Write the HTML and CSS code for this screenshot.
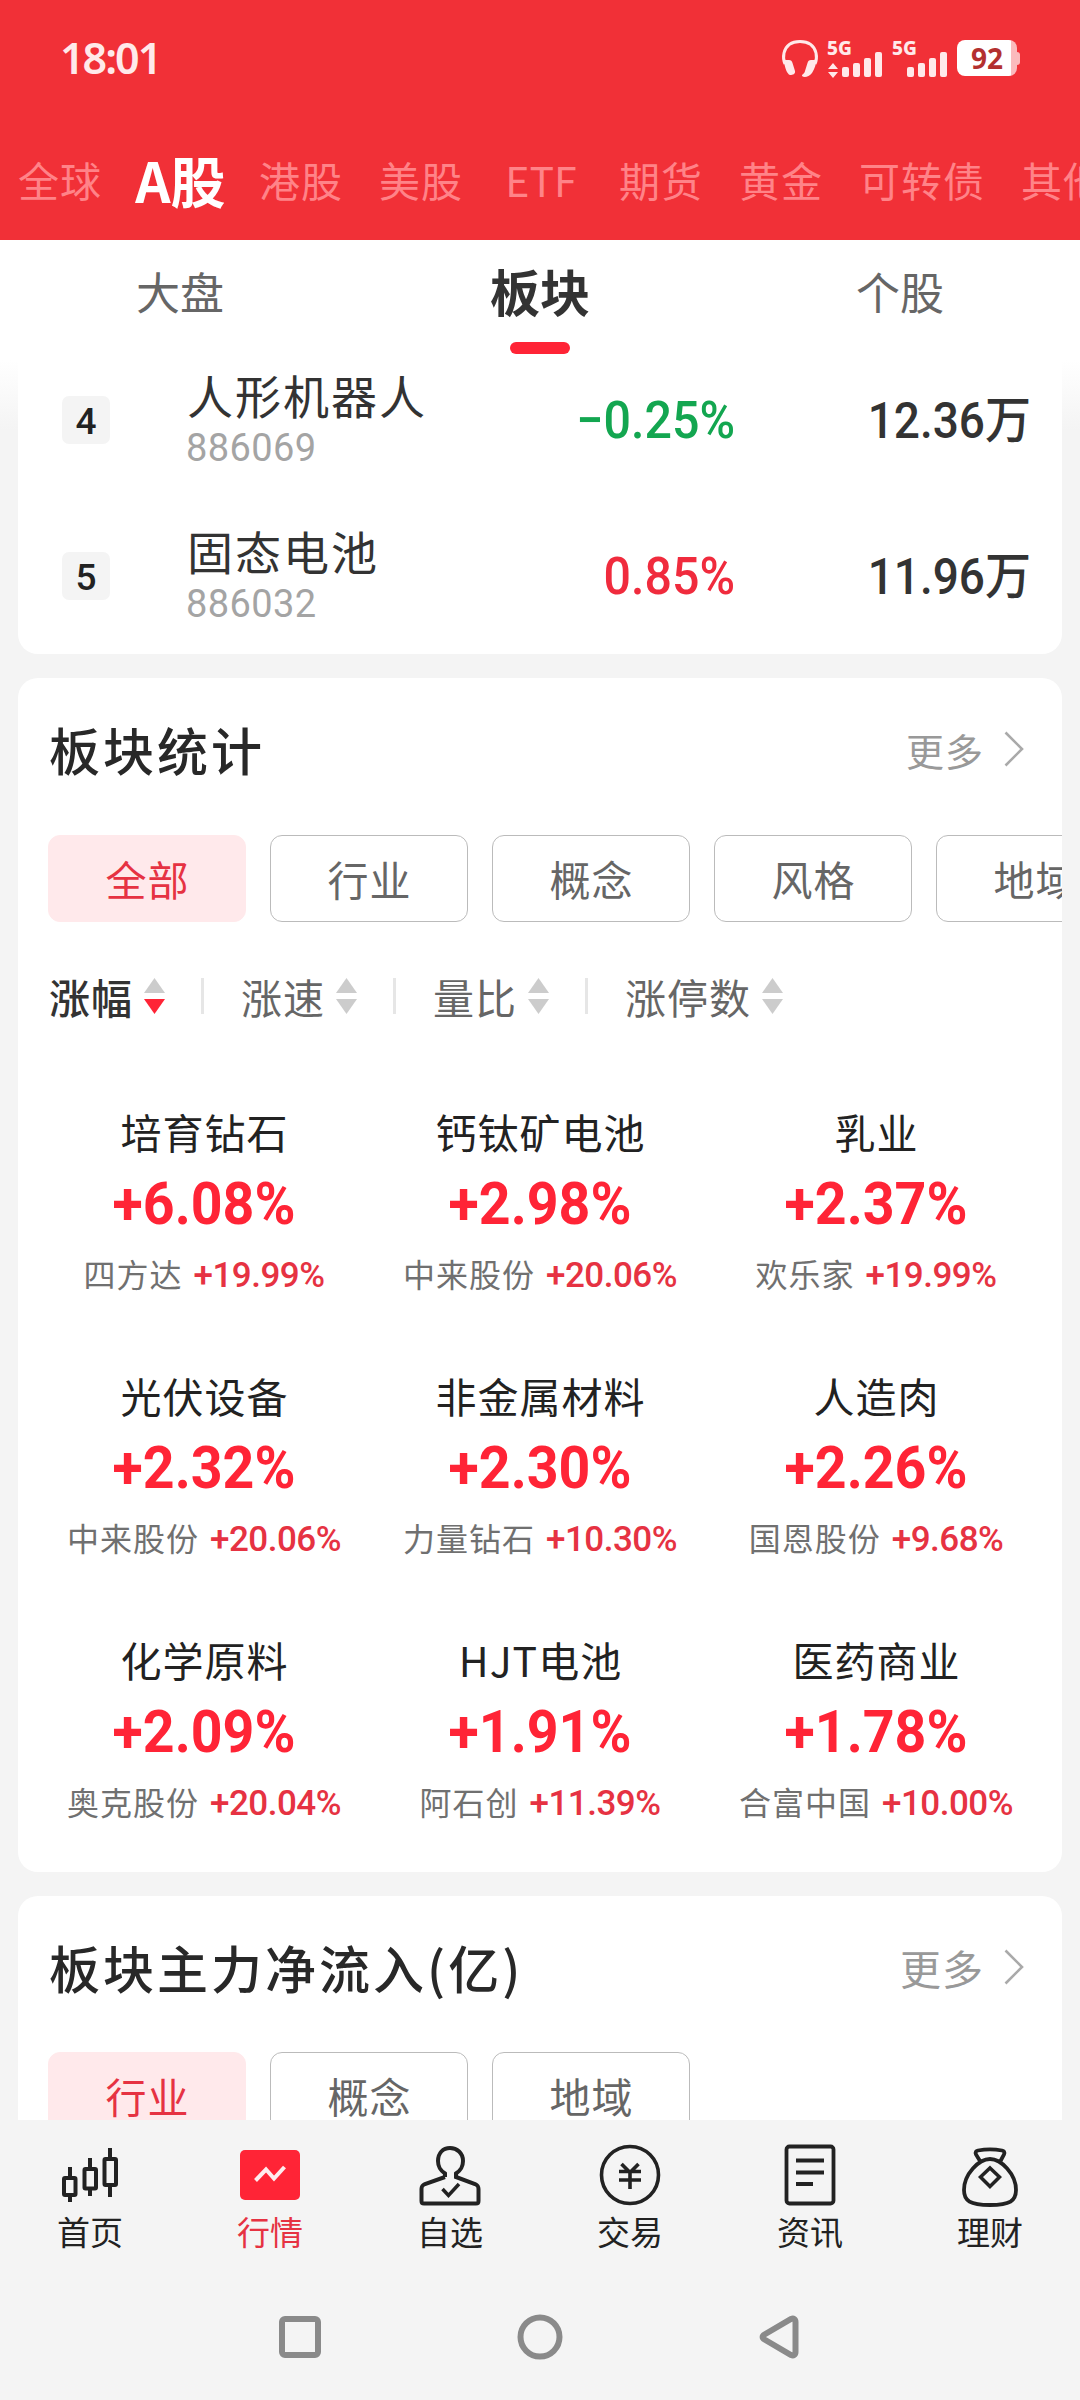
FILE: index.html
```
<!DOCTYPE html>
<html lang="zh-CN">
<head>
  <meta charset="UTF-8">
  <title>行情 - 板块</title>
  <link rel="stylesheet" href="styles.css">
</head>
<body>
  <div class="phone">
    <header class="header">
      <div class="status-bar">
        <span class="time">18:01</span>
        <div class="status-icons">
          <svg class="icon-headset" width="36" height="38" viewBox="0 0 36 38">
            <path d="M3 24 C1 19 1.500 15 2 13 C4 5 10 1.500 18 1.500 S32 5 34 13 C34.500 15 35 19 33 24" fill="none" stroke="#ffe9ea" stroke-width="3"/>
            <path d="M1.500 20 H7 C9 20 10 21 10.500 23 L13 31 C13.500 34 11 35 8 35 C5 34 3 28 1.500 20Z" fill="#ffe9ea"/>
            <path d="M34.500 20 H29 C27 20 26 21 25.500 23 L23 31 C22.500 34 20 34 20 36 C22 38 27 37 30 33 C33 28 34 24 34.500 20Z" fill="#ffe9ea"/>
          </svg>
          <svg class="icon-signal" width="55" height="38" viewBox="0 0 55 38">
            <text x="-1" y="15" class="net">5G</text>
            <path d="M0 29 L5 23 L10 29Z M0 32 L5 38 L10 32Z" fill="#ffe9ea"/>
            <g fill="#ffe9ea">
              <rect x="14" y="27" width="7" height="10" rx="2"/>
              <rect x="25" y="23" width="7" height="14" rx="2"/>
              <rect x="36" y="18" width="7" height="19" rx="2"/>
              <rect x="47" y="12" width="7" height="25" rx="2"/>
            </g>
          </svg>
          <svg class="icon-signal" width="55" height="38" viewBox="0 0 55 38">
            <text x="-1" y="15" class="net">5G</text>
            <g fill="#ffe9ea">
              <rect x="14" y="27" width="7" height="10" rx="2"/>
              <rect x="25" y="23" width="7" height="14" rx="2"/>
              <rect x="36" y="18" width="7" height="19" rx="2"/>
              <rect x="47" y="12" width="7" height="25" rx="2"/>
            </g>
          </svg>
          <div class="battery">92</div>
          <div class="battery-cap"></div>
        </div>
      </div>
      <nav class="market-tabs">
        <a>全球</a>
        <a class="active">A股</a>
        <a>港股</a>
        <a>美股</a>
        <a class="etf">ETF</a>
        <a>期货</a>
        <a>黄金</a>
        <a>可转债</a>
        <a>其他</a>
      </nav>
    </header>

    <nav class="sub-tabs">
      <a>大盘</a>
      <a class="active">板块</a>
      <a>个股</a>
    </nav>

    <main class="content">
      <section class="card hot-card">
        <div class="hot-row">
          <span class="rank">4</span>
          <div class="hot-name">
            <div class="name">人形机器人</div>
            <div class="code">886069</div>
          </div>
          <span class="change down">−0.25%</span>
          <span class="heat">12.36万</span>
        </div>
        <div class="hot-row">
          <span class="rank">5</span>
          <div class="hot-name">
            <div class="name">固态电池</div>
            <div class="code">886032</div>
          </div>
          <span class="change up">0.85%</span>
          <span class="heat">11.96万</span>
        </div>
      </section>

      <section class="card">
        <div class="card-head">
          <h2>板块统计</h2>
          <a class="more">更多
            <svg width="20" height="36" viewBox="0 0 20 36"><path d="M1.500 1.500 L18 18 L1.500 34.500" fill="none" stroke="#aaa" stroke-width="2.600"/></svg>
          </a>
        </div>
        <div class="chips">
          <span class="chip active">全部</span>
          <span class="chip">行业</span>
          <span class="chip">概念</span>
          <span class="chip">风格</span>
          <span class="chip">地域</span>
        </div>
        <div class="sorts">
          <div class="sort active">涨幅
            <svg width="21" height="36" viewBox="0 0 21 36"><path class="asc" d="M10.500 0 L21 15 H0Z"/><path class="desc" d="M0 21 H21 L10.500 36Z"/></svg>
          </div>
          <div class="sort">涨速
            <svg width="21" height="36" viewBox="0 0 21 36"><path class="asc" d="M10.500 0 L21 15 H0Z"/><path class="desc" d="M0 21 H21 L10.500 36Z"/></svg>
          </div>
          <div class="sort">量比
            <svg width="21" height="36" viewBox="0 0 21 36"><path class="asc" d="M10.500 0 L21 15 H0Z"/><path class="desc" d="M0 21 H21 L10.500 36Z"/></svg>
          </div>
          <div class="sort">涨停数
            <svg width="21" height="36" viewBox="0 0 21 36"><path class="asc" d="M10.500 0 L21 15 H0Z"/><path class="desc" d="M0 21 H21 L10.500 36Z"/></svg>
          </div>
        </div>
        <div class="sector-grid">
          <div class="sector">
            <div class="sector-name">培育钻石</div>
            <div class="sector-rate">+6.08%</div>
            <div class="leader">四方达<b>+19.99%</b></div>
          </div>
          <div class="sector">
            <div class="sector-name">钙钛矿电池</div>
            <div class="sector-rate">+2.98%</div>
            <div class="leader">中来股份<b>+20.06%</b></div>
          </div>
          <div class="sector">
            <div class="sector-name">乳业</div>
            <div class="sector-rate">+2.37%</div>
            <div class="leader">欢乐家<b>+19.99%</b></div>
          </div>
          <div class="sector">
            <div class="sector-name">光伏设备</div>
            <div class="sector-rate">+2.32%</div>
            <div class="leader">中来股份<b>+20.06%</b></div>
          </div>
          <div class="sector">
            <div class="sector-name">非金属材料</div>
            <div class="sector-rate">+2.30%</div>
            <div class="leader">力量钻石<b>+10.30%</b></div>
          </div>
          <div class="sector">
            <div class="sector-name">人造肉</div>
            <div class="sector-rate">+2.26%</div>
            <div class="leader">国恩股份<b>+9.68%</b></div>
          </div>
          <div class="sector">
            <div class="sector-name">化学原料</div>
            <div class="sector-rate">+2.09%</div>
            <div class="leader">奥克股份<b>+20.04%</b></div>
          </div>
          <div class="sector">
            <div class="sector-name">HJT电池</div>
            <div class="sector-rate">+1.91%</div>
            <div class="leader">阿石创<b>+11.39%</b></div>
          </div>
          <div class="sector">
            <div class="sector-name">医药商业</div>
            <div class="sector-rate">+1.78%</div>
            <div class="leader">合富中国<b>+10.00%</b></div>
          </div>
        </div>
      </section>

      <section class="card flow-card">
        <div class="card-head">
          <h2>板块主力净流入(亿)</h2>
          <a class="more">更多
            <svg width="20" height="36" viewBox="0 0 20 36"><path d="M1.500 1.500 L18 18 L1.500 34.500" fill="none" stroke="#aaa" stroke-width="2.600"/></svg>
          </a>
        </div>
        <div class="chips">
          <span class="chip active">行业</span>
          <span class="chip">概念</span>
          <span class="chip">地域</span>
        </div>
      </section>
    </main>

    <nav class="tab-bar">
      <a>
        <svg width="64" height="64" viewBox="0 0 64 64" fill="none" stroke="#222" stroke-width="4">
          <rect x="6" y="35" width="11.500" height="17" rx="1"/><path d="M12 24 V35 M12 52 V59"/>
          <rect x="26.500" y="26" width="11.500" height="19.500" rx="1"/><path d="M32 15 V26 M32 45 V53"/>
          <rect x="46.500" y="16" width="11.500" height="26" rx="1"/><path d="M52 5 V16 M52 42 V54"/>
        </svg>
        首页
      </a>
      <a class="active">
        <svg width="64" height="64" viewBox="0 0 64 64">
          <rect x="2" y="7" width="60" height="50" rx="5" fill="#ff2436"/>
          <path d="M17.500 37.500 L28 26.500 L36 35.500 L46.500 24" fill="none" stroke="#ffecee" stroke-width="4"/>
        </svg>
        行情
      </a>
      <a>
        <svg width="64" height="64" viewBox="0 0 64 64" fill="none" stroke="#222" stroke-width="4">
          <path d="M27 34 V30.500 C22 27 20 24 20 18 C20 10 25 5 32 5 S45 10 45 18 C45 24 43 27 38 30.500 V34 L57 41 C60 42.500 60.500 43.500 60.500 46 V58 C60.500 60 60 60.500 58 60.500 H6 C4 60.500 3.500 60 3.500 58 V46 C3.500 43.500 4 42.500 7 41 L27 34"/>
          <path d="M24.500 46 L30.500 52.500 L41 41" stroke-width="3.500"/>
        </svg>
        自选
      </a>
      <a>
        <svg width="64" height="64" viewBox="0 0 64 64" fill="none" stroke="#222" stroke-width="3.600">
          <circle cx="32" cy="32" r="28.500"/>
          <path d="M23.500 21 L32 29.500 L40.500 21 M32 29 V46 M21 28.500 H43 M21 37 H43"/>
        </svg>
        交易
      </a>
      <a>
        <svg width="64" height="64" viewBox="0 0 64 64" fill="none" stroke="#222" stroke-width="3.800">
          <rect x="8.500" y="3.500" width="47" height="57" rx="3"/>
          <path d="M18 17.500 H46 M18 29.500 H46 M18 41 H35"/>
        </svg>
        资讯
      </a>
      <a>
        <svg width="64" height="64" viewBox="0 0 64 64" fill="none" stroke="#222" stroke-width="3.800">
          <path d="M22 18 L18 11.500 C17 9 18 8 20 7.500 C28 6 36 6 44 7.500 C46 8 47 9 46 11.500 L42.500 18"/>
          <path d="M32 16 C43 16 58 31 58 47 C58 58 52 62 32 62 S6 58 6 47 C6 31 21 16 32 16Z"/>
          <path d="M32 25 L41.500 34 L32 43.500 L22.500 34Z" stroke-width="3.500"/>
        </svg>
        理财
      </a>
    </nav>

    <div class="system-nav">
      <svg width="46" height="46" viewBox="0 0 46 46"><rect x="5" y="5" width="36" height="36" rx="3"/></svg>
      <svg width="46" height="46" viewBox="0 0 46 46"><circle cx="23" cy="23" r="19.500"/></svg>
      <svg width="46" height="46" viewBox="0 0 46 46"><path d="M7.500 20.500 L34 5 C36.500 4 38.500 5 38.500 8 V38 C38.500 41 36.500 42 34 41 L7.500 25.500 C5 24 5 22 7.500 20.500Z"/></svg>
    </div>
  </div>
</body>
</html>
```
FILE: styles.css
```
* {
  box-sizing: border-box;
}

body {
  margin: 0;
  font-family: "Noto Sans CJK SC", sans-serif;
  background: #f4f4f4;
  color: #333;
}

.phone {
  width: 1080px;
  height: 2400px;
  overflow: hidden;
  display: flex;
  flex-direction: column;
}

svg {
  flex: none;
  overflow: visible;
}

/* header */
.header {
  flex: none;
  height: 240px;
  background: #f13037;
}

.status-bar {
  height: 118px;
  padding: 0 60px;
  display: flex;
  justify-content: space-between;
}

.time {
  font-family: "Noto Sans", sans-serif;
  font-size: 43px;
  font-weight: 600;
  line-height: 60px;
  margin-top: 28px;
  letter-spacing: -2px;
  color: #ffe9ea;
}

.status-icons {
  display: flex;
  margin-top: 40px;
}

.icon-headset { margin-right: 10px; }
.icon-signal { margin-right: 10px; }
.icon-signal + .battery { margin-left: -1px; }

.net {
  font-family: "Noto Sans", sans-serif;
  font-size: 19px;
  font-weight: 800;
  fill: #ffe9ea;
}

.battery {
  width: 60px;
  height: 36px;
  border-radius: 8px;
  background: linear-gradient(to right, #fff 54px, #fbbabd 54px);
  color: #b3302f;
  font-family: "Noto Sans", sans-serif;
  font-size: 28px;
  font-weight: 700;
  line-height: 36px;
  text-align: center;
}

.battery-cap {
  width: 3px;
  height: 13px;
  margin-top: 12px;
  border-radius: 0 3px 3px 0;
  background: #fbbabd;
}

.market-tabs {
  height: 122px;
  padding-left: 18px;
  display: flex;
  align-items: center;
  gap: 36px;
  overflow: hidden;
  white-space: nowrap;
}

.market-tabs a {
  flex: none;
  font-size: 41px;
  line-height: 60px;
  letter-spacing: 1px;
  color: #ff8388;
}

.market-tabs .active {
  width: 93px;
  margin: 0 -4px;
  display: flex;
  justify-content: center;
  font-size: 55px;
  font-weight: 700;
  letter-spacing: 0;
  color: #fff;
}

.market-tabs .etf {
  width: 84px;
  letter-spacing: 0;
  text-align: center;
}

/* sub tabs */
.sub-tabs {
  flex: none;
  height: 120px;
  background: #fff;
  display: flex;
}

.sub-tabs a {
  flex: 1;
  display: flex;
  flex-direction: column;
  align-items: center;
  font-size: 44px;
  line-height: 102px;
  color: #666;
}

.sub-tabs .active {
  font-size: 50px;
  font-weight: 700;
  line-height: 100px;
  color: #333;
}

.sub-tabs .active::after {
  content: "";
  width: 60px;
  height: 12px;
  margin-top: 2px;
  border-radius: 6px;
  background: #ff2436;
}

/* content */
.content {
  flex: none;
  height: 1760px;
  padding: 0 18px;
  overflow: hidden;
  background: linear-gradient(#fff, #f4f4f4 70px);
}

.card {
  background: #fff;
  border-radius: 20px;
  margin-bottom: 24px;
  overflow: hidden;
}

.hot-card {
  border-radius: 0 0 20px 20px;
  margin-top: -18px;
}

.hot-row {
  height: 156px;
  padding: 0 31px 0 44px;
  display: flex;
  align-items: center;
}

.rank {
  width: 48px;
  height: 48px;
  border-radius: 7px;
  background: #f4f4f4;
  color: #222;
  font-family: Roboto, sans-serif;
  font-size: 37px;
  font-weight: 500;
  line-height: 52px;
  text-align: center;
}

.hot-name {
  width: 320px;
  margin-left: 77px;
}

.name {
  font-size: 46px;
  line-height: 54px;
  letter-spacing: 2px;
}

.code {
  font-family: Roboto, sans-serif;
  font-size: 38px;
  line-height: 52px;
  letter-spacing: 0.400px;
  color: #a4a4a4;
  margin: 1px 0 0 -1px;
}

.change {
  flex: 1;
  text-align: right;
  font-family: Roboto, sans-serif;
  font-size: 52px;
  font-weight: 500;
  line-height: 60px;
  padding-top: 2px;
  transform: scaleX(0.93);
  transform-origin: right;
}

.up { color: #f02b3d; }
.down { color: #13a650; }

.heat {
  width: 296px;
  text-align: right;
  font-family: Roboto, "Noto Sans CJK SC", sans-serif;
  font-size: 50px;
  font-weight: 500;
  line-height: 60px;
  padding-top: 2px;
  transform: scaleX(0.92);
  transform-origin: right;
}

.card-head {
  height: 142px;
  padding: 0 38px 0 31px;
  display: flex;
  align-items: center;
  justify-content: space-between;
}

.card-head h2 {
  margin: 0;
  font-size: 51px;
  font-weight: 500;
  letter-spacing: 3px;
  color: #282828;
}

.more {
  display: flex;
  align-items: center;
  gap: 20px;
  font-size: 38px;
  letter-spacing: 1px;
  color: #999;
}

.flow-card .more {
  font-size: 41px;
}

.chips {
  display: flex;
  gap: 24px;
  padding-left: 30px;
  margin-top: 15px;
  overflow: hidden;
}

.flow-card .chips {
  margin-top: 14px;
}

.chip {
  flex: none;
  width: 198px;
  height: 87px;
  border: 1px solid #bbb;
  border-radius: 12px;
  font-size: 41px;
  line-height: 84px;
  letter-spacing: 1px;
  text-indent: 1px;
  text-align: center;
  color: #666;
}

.chip.active {
  background: #ffe9eb;
  border-color: #ffe9eb;
  color: #e63242;
}

.sorts {
  display: flex;
  align-items: center;
  height: 60px;
  margin: 44px 0 54px;
  padding-left: 31px;
}

.sort {
  display: flex;
  align-items: center;
  gap: 11px;
  font-size: 41px;
  letter-spacing: 1px;
  line-height: 58px;
  color: #666;
}

.sort + .sort::before {
  content: "";
  width: 3px;
  height: 36px;
  margin: 0 26px 0 36px;
  background: #e6e6e6;
}

.sort .asc,
.sort .desc { fill: #ccc; }

.sort.active { color: #333; font-weight: 500; }
.sort.active .desc { fill: #ff2436; }

.sector-grid {
  display: grid;
  grid-template-columns: repeat(3, 336px);
  justify-content: center;
}

.sector {
  height: 264px;
  padding-top: 27px;
  text-align: center;
}

.sector-name {
  font-size: 41px;
  letter-spacing: 1px;
  text-indent: 1px;
  line-height: 49px;
  color: #222;
}

.sector-rate {
  margin-top: 18px;
  font-family: Roboto, sans-serif;
  font-size: 60px;
  font-weight: 700;
  line-height: 60px;
  color: #ff2436;
  transform: scaleX(0.925);
}

.leader {
  margin-top: 19px;
  font-size: 32px;
  letter-spacing: 1px;
  line-height: 40px;
  color: #707070;
}

.leader b {
  margin-left: 11px;
  font-family: Roboto, sans-serif;
  font-size: 35px;
  font-weight: 500;
  letter-spacing: -0.500px;
  color: #e63242;
}

/* bottom bar */
.tab-bar {
  flex: none;
  height: 160px;
  padding-top: 23px;
  display: flex;
}

.tab-bar a {
  flex: 1;
  display: flex;
  flex-direction: column;
  align-items: center;
  font-size: 33px;
  line-height: 48px;
  color: #222;
}

.tab-bar .active { color: #e63242; }

.system-nav {
  flex: none;
  height: 120px;
  padding: 34px 277px 0;
  display: flex;
  justify-content: space-between;
}

.system-nav svg {
  fill: none;
  stroke: #8a8a8a;
  stroke-width: 6;
}
```
